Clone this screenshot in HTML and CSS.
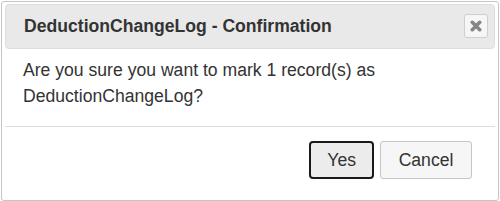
FILE: index.html
```html
<!DOCTYPE html>
<html>
<head>
<meta charset="utf-8">
<link rel="stylesheet" href="styles.css">
</head>
<body>
<div class="dialog">
  <div class="titlebar">
    <span class="title">DeductionChangeLog - Confirmation</span>
    <button class="close" type="button" aria-label="Close">
      <svg width="12" height="12" viewBox="0 0 12 12"><path d="M2.3 2.3 L9.7 9.7 M9.7 2.3 L2.3 9.7" stroke="#858585" stroke-width="3.6" stroke-linecap="round"/></svg>
    </button>
  </div>
  <div class="content">Are you sure you want to mark 1 record(s) as DeductionChangeLog?</div>
  <div class="buttonpane">
    <button class="btn btn-focus" type="button">Yes</button>
    <button class="btn" type="button">Cancel</button>
  </div>
</div>
</body>
</html>
```

FILE: styles.css
```css
html, body {
  margin: 0;
  padding: 0;
  background: #fff;
  overflow: hidden;
}
body {
  font-family: "Liberation Sans", Arial, sans-serif;
  font-size: 17.6px;
  color: #333;
}
.dialog {
  box-sizing: border-box;
  width: 498px;
  height: 200px;
  margin: 1px 0 0 1px;
  padding: 2px 3px 3px 3px;
  border: 1px solid #c5c5c5;
  border-radius: 3px;
  background: #fff;
}
.titlebar {
  display: flex;
  align-items: center;
  justify-content: space-between;
  padding: 9px 6px 10px 18px;
  border: 1px solid #dddddd;
  border-radius: 4px;
  background: #e9e9e9;
}
.title {
  font-weight: bold;
  line-height: 22px;
  color: #333;
}
.close {
  box-sizing: border-box;
  width: 24px;
  height: 24px;
  padding: 0;
  margin: 0;
  display: flex;
  align-items: center;
  justify-content: center;
  border: 1px solid #cfcfcf;
  border-radius: 3px;
  background: #f6f6f6;
}
.content {
  padding: 8px 18px 0 18px;
  line-height: 26px;
  height: 61px;
}
.buttonpane {
  display: flex;
  justify-content: flex-end;
  gap: 6px;
  margin-top: 8px;
  padding: 14px 23px 0 0;
  border-top: 1px solid #dddddd;
}
.btn {
  box-sizing: border-box;
  height: 38px;
  padding: 0 17.6px;
  font-family: inherit;
  font-size: 17.6px;
  color: #333;
  background: #f6f6f6;
  border: 1px solid #c5c5c5;
  border-radius: 3px;
}
.btn-focus {
  padding: 0 16px;
  border: 2px solid #1a1a1a;
  border-radius: 4px;
  background: #ececec;
}
```
